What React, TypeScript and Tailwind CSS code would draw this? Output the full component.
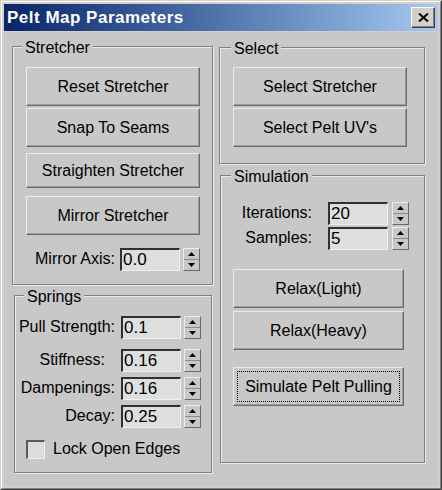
import React from "react";

const raised =
  "border border-t-[#ececec] border-l-[#ececec] border-r-[#6a6a6a] border-b-[#6a6a6a] shadow-[inset_-1px_-1px_0_#9c9c9c]";

const Btn = ({
  label,
  className = "",
  focus = false,
}: {
  label: string;
  className?: string;
  focus?: boolean;
}) => (
  <div
    className={`flex items-center justify-center text-[16px] ${raised} ${focus ? "p-[3px]" : ""} ${className}`}
  >
    {focus ? (
      <span className="flex h-full w-full items-center justify-center border border-dotted border-black">
        {label}
      </span>
    ) : (
      label
    )}
  </div>
);

const Spinner = () => (
  <div className="flex h-[23px] w-[17px] flex-col border border-t-[#ececec] border-l-[#ececec] border-r-[#6a6a6a] border-b-[#6a6a6a]">
    <div className="flex flex-1 items-center justify-center border-b border-[#8a8a8a]">
      <svg width="7" height="4" viewBox="0 0 7 4">
        <path d="M3.5 0L7 4H0z" fill="#000" />
      </svg>
    </div>
    <div className="flex flex-1 items-center justify-center">
      <svg width="7" height="4" viewBox="0 0 7 4">
        <path d="M0 0H7L3.5 4z" fill="#000" />
      </svg>
    </div>
  </div>
);

const Field = ({ value }: { value: string }) => (
  <div className="flex h-[23px] w-[60px] items-center border-t-2 border-l-2 border-r border-b border-t-[#303030] border-l-[#303030] border-r-[#efefef] border-b-[#efefef] bg-[#dedede] pl-[1px] text-[17px] leading-none">
    {value}
  </div>
);

const SpinRow = ({
  label,
  value,
  labelClass,
  gap,
  className = "",
}: {
  label: string;
  value: string;
  labelClass: string;
  gap: string;
  className?: string;
}) => (
  <div className={`flex items-center justify-end ${className}`}>
    <span className={`text-[16px] ${labelClass}`}>{label}</span>
    <Field value={value} />
    <div className={gap}>
      <Spinner />
    </div>
  </div>
);

const Group = ({
  title,
  labelClass,
  className = "",
  children,
}: {
  title: string;
  labelClass: string;
  className?: string;
  children: React.ReactNode;
}) => (
  <div
    className={`border border-[#808080] shadow-[1px_1px_0_#ebebeb,inset_1px_1px_0_#ebebeb] ${className}`}
  >
    <div
      className={`-mt-[8px] w-fit bg-[#c8c8c8] px-[3px] text-[16px] leading-[18px] ${labelClass}`}
    >
      {title}
    </div>
    {children}
  </div>
);

const App = () => {
  return (
    <div className="h-[490px] w-[442px] border border-t-[#d4d0c8] border-l-[#d4d0c8] border-r-[#404040] border-b-[#404040] font-['Liberation_Sans',Arial,sans-serif] text-black">
      <div className="flex h-full flex-col border border-t-white border-l-white border-r-[#808080] border-b-[#808080] bg-[#d4d0c8] p-[2px]">
        {/* Title bar */}
        <div className="flex h-[27px] items-center bg-gradient-to-r from-[#0a246a] to-[#a6caf0] pl-[3px] pr-[3px]">
          <span className="text-[17px] font-bold tracking-[0.5px] text-white">
            Pelt Map Parameters
          </span>
          <div className="ml-auto flex h-[21px] w-[24px] items-center justify-center border border-t-white border-l-white border-r-[#404040] border-b-[#404040] bg-[#d4d0c8] shadow-[inset_-1px_-1px_0_#808080]">
            <svg width="11" height="9" viewBox="0 0 11 9">
              <path d="M1 0.5L10 8.5M10 0.5L1 8.5" stroke="#000" strokeWidth="2" />
            </svg>
          </div>
        </div>

        {/* Body */}
        <div className="mt-[1px] flex flex-1 gap-[6px] bg-[#c8c8c8] pl-[8px] pr-[13px] pt-[14px]">
          {/* Left column */}
          <div className="w-[201px]">
            <Group title="Stretcher" labelClass="ml-[9px]">
              <div className="flex flex-col pl-[13px] pr-[12px] pt-[10px] pb-[13px]">
                <Btn label="Reset Stretcher" className="h-[39px] w-[174px]" />
                <Btn label="Snap To Seams" className="mt-[2px] h-[39px] w-[174px]" />
                <Btn label="Straighten Stretcher" className="mt-[6px] h-[35px] w-[174px]" />
                <Btn label="Mirror Stretcher" className="mt-[8px] h-[39px] w-[174px]" />
                <SpinRow
                  label="Mirror Axis:"
                  value="0.0"
                  labelClass="mr-[5px]"
                  gap="ml-[3px]"
                  className="mt-[12px]"
                />
              </div>
            </Group>

            <Group title="Springs" labelClass="ml-[9px]" className="ml-[2px] mr-[1px] mt-[10px]">
              <div className="flex flex-col pr-[10px] pt-[9px] pb-[11px]">
                <SpinRow label="Pull Strength:" value="0.1" labelClass="mr-[6px]" gap="ml-[3px]" />
                <SpinRow label="Stiffness:" value="0.16" labelClass="mr-[16px]" gap="ml-[3px]" className="mt-[9px]" />
                <SpinRow label="Dampenings:" value="0.16" labelClass="mr-[6px]" gap="ml-[3px]" className="mt-[4px]" />
                <SpinRow label="Decay:" value="0.25" labelClass="mr-[6px]" gap="ml-[3px]" className="mt-[4px]" />
                <div className="mt-[9px] flex items-center pl-[11px]">
                  <div className="h-[19px] w-[19px] border-t-2 border-l-2 border-r border-b border-t-[#5a5a5a] border-l-[#5a5a5a] border-r-[#efefef] border-b-[#efefef] bg-[#dcdcdc]" />
                  <span className="ml-[8px] text-[16px]">Lock Open Edges</span>
                </div>
              </div>
            </Group>
          </div>

          {/* Right column */}
          <div className="w-[206px]">
            <Group title="Select" labelClass="ml-[11px]" className="mt-[1px]">
              <div className="flex flex-col pl-[13px] pt-[9px] pb-[16px]">
                <Btn label="Select Stretcher" className="h-[39px] w-[174px]" />
                <Btn label="Select Pelt UV's" className="mt-[2px] h-[39px] w-[174px]" />
              </div>
            </Group>

            <Group title="Simulation" labelClass="ml-[10px]" className="ml-[1px] mt-[11px]">
              <div className="flex flex-col pt-[15px] pb-[56px]">
                <SpinRow label="Iterations:" value="20" labelClass="mr-[16px]" gap="ml-[4px]" className="pr-[15px]" />
                <SpinRow label="Samples:" value="5" labelClass="mr-[16px]" gap="ml-[4px]" className="mt-[1px] pr-[15px]" />
                <div className="flex flex-col pl-[12px]">
                  <Btn label="Relax(Light)" className="mt-[19px] h-[39px] w-[171px]" />
                  <Btn label="Relax(Heavy)" className="mt-[3px] h-[39px] w-[171px]" />
                  <Btn label="Simulate Pelt Pulling" focus className="mt-[17px] h-[39px] w-[171px]" />
                </div>
              </div>
            </Group>
          </div>
        </div>
      </div>
    </div>
  );
};

export default App;
